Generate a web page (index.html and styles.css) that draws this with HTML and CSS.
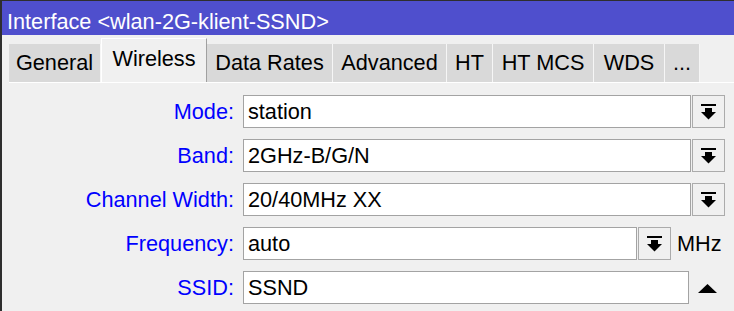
FILE: index.html
```html
<!DOCTYPE html>
<html lang="en">
<head>
    <meta charset="UTF-8">
    <title>Interface &lt;wlan-2G-klient-SSND&gt;</title>
    <link rel="stylesheet" href="styles.css">
</head>
<body>
    <div class="window">
        <div class="titlebar">Interface &lt;wlan-2G-klient-SSND&gt;</div>

        <div class="tabs">
            <div class="tab tab-general">General</div>
            <div class="tab tab-wireless active">Wireless</div>
            <div class="tab tab-rates">Data Rates</div>
            <div class="tab tab-advanced">Advanced</div>
            <div class="tab tab-ht">HT</div>
            <div class="tab tab-mcs">HT MCS</div>
            <div class="tab tab-wds">WDS</div>
            <div class="tab tab-more">...</div>
        </div>

        <div class="panel">
            <div class="row">
                <div class="label">Mode:</div>
                <div class="field">
                    <div class="input">station</div>
                    <div class="drop">
                        <svg width="15" height="16" viewBox="0 0 15 16"><rect x="0" y="0" width="15" height="2"/><rect x="4" y="4" width="7" height="4"/><polygon points="0,8 15,8 7.5,15.5"/></svg>
                    </div>
                </div>
            </div>
            <div class="row">
                <div class="label">Band:</div>
                <div class="field">
                    <div class="input">2GHz-B/G/N</div>
                    <div class="drop">
                        <svg width="15" height="16" viewBox="0 0 15 16"><rect x="0" y="0" width="15" height="2"/><rect x="4" y="4" width="7" height="4"/><polygon points="0,8 15,8 7.5,15.5"/></svg>
                    </div>
                </div>
            </div>
            <div class="row">
                <div class="label">Channel Width:</div>
                <div class="field">
                    <div class="input">20/40MHz XX</div>
                    <div class="drop">
                        <svg width="15" height="16" viewBox="0 0 15 16"><rect x="0" y="0" width="15" height="2"/><rect x="4" y="4" width="7" height="4"/><polygon points="0,8 15,8 7.5,15.5"/></svg>
                    </div>
                </div>
            </div>
            <div class="row">
                <div class="label">Frequency:</div>
                <div class="field">
                    <div class="input input-short">auto</div>
                    <div class="drop">
                        <svg width="15" height="16" viewBox="0 0 15 16"><rect x="0" y="0" width="15" height="2"/><rect x="4" y="4" width="7" height="4"/><polygon points="0,8 15,8 7.5,15.5"/></svg>
                    </div>
                    <div class="unit">MHz</div>
                </div>
            </div>
            <div class="row">
                <div class="label">SSID:</div>
                <div class="field">
                    <div class="input input-ssid">SSND</div>
                    <svg class="collapse" width="19" height="9" viewBox="0 0 19 9"><polygon points="9.5,0 19,9 0,9"/></svg>
                </div>
            </div>
        </div>
    </div>
</body>
</html>
```

FILE: styles.css
```css
* {
    margin: 0;
    padding: 0;
    box-sizing: border-box;
}

body {
    font-family: "Liberation Sans", Arial, sans-serif;
    font-size: 21.7px;
    background: #f0f0f0;
    overflow: hidden;
}

.window {
    height: 311px;
    border-top: 1px solid #2e2e2e;
    border-left: 2px solid #2e2e2e;
}

.titlebar {
    height: 34px;
    background: #4f4fcd;
    color: white;
    padding: 7px 0 0 5px;
    line-height: 27px;
    white-space: nowrap;
}

.tabs {
    display: flex;
    align-items: flex-end;
    height: 47px;
    padding-left: 7px;
}

.tab {
    height: 38px;
    line-height: 38px;
    background: #d9d9d9;
    color: #000;
    text-align: center;
    border-right: 1px solid #f6f6f6;
    white-space: nowrap;
}

.tab.active {
    height: 44px;
    background: #f0f0f0;
    border-top: 1px solid #fff;
    border-left: 1px solid #fff;
    border-right: 1px solid #a0a0a0;
    padding-top: 1px;
    line-height: 38px;
}

.tab-general { width: 92px; }
.tab-wireless { width: 106px; }
.tab-rates { width: 126px; }
.tab-advanced { width: 114px; }
.tab-ht { width: 46px; }
.tab-mcs { width: 101px; }
.tab-wds { width: 71px; }
.tab-more { width: 35px; }

.panel {
    margin-left: 7px;
    border-top: 1px solid #fff;
    padding-top: 12px;
}

.row {
    display: flex;
    align-items: center;
    height: 33px;
    margin-bottom: 11px;
}

.label {
    width: 225px;
    text-align: right;
    color: #0000ff;
    white-space: nowrap;
}

.field {
    display: flex;
    align-items: center;
    margin-left: 9px;
}

.input {
    width: 448px;
    height: 33px;
    line-height: 31px;
    padding-left: 4px;
    background: white;
    border: 1px solid #a3a3a3;
    color: #000;
}

.input-short {
    width: 394px;
}

.input-ssid {
    width: 446px;
}

.drop {
    width: 33px;
    height: 33px;
    margin-left: 1px;
    background: #f0f0f0;
    border: 1px solid #ababab;
    display: flex;
    align-items: center;
    justify-content: center;
}

.drop svg {
    fill: #000;
}

.unit {
    margin-left: 6px;
    color: #000;
}

.collapse {
    margin-left: 9px;
    margin-top: 2px;
    fill: #000;
}
```
